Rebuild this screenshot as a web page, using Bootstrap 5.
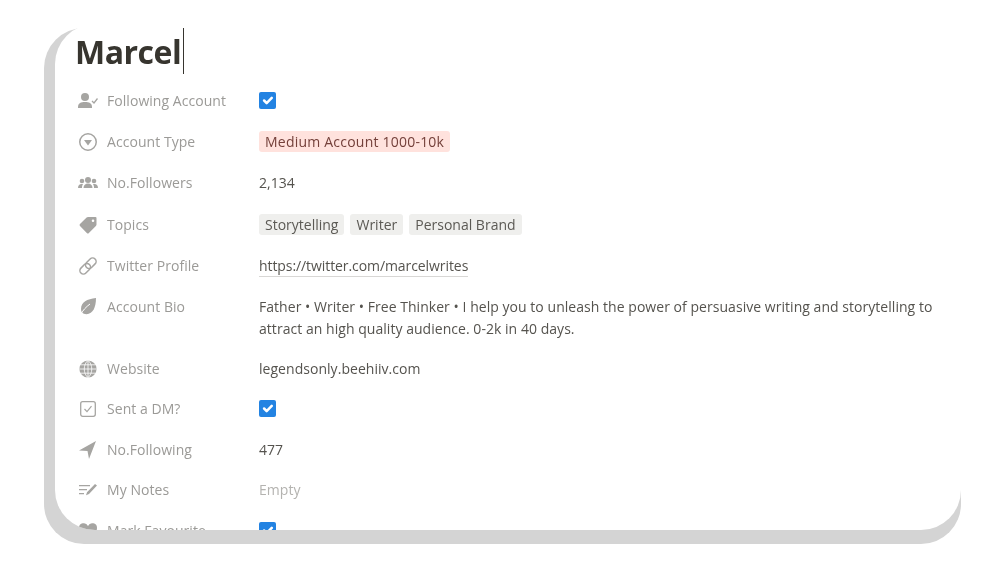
<!DOCTYPE html>
<html lang="en">
<head>
<meta charset="UTF-8">
<meta name="viewport" content="width=device-width, initial-scale=1.0">
<title>Marcel</title>
<link href="https://cdn.jsdelivr.net/npm/bootstrap@5.3.2/dist/css/bootstrap.min.css" rel="stylesheet">
<style>
body { background: #fff; font-family: "Open Sans", "Noto Sans", sans-serif; overflow: hidden; }
.page-frame { display: flow-root; margin: 28px 44px 0 44px; height: 516px; background: #d4d4d4; border-radius: 40px; }
.page-sheet { margin: -4px 0 14px 11px; height: 506px; background: #fff; border-radius: 40px 0 40px 40px; overflow: hidden; padding: 0 0 0 21px; filter: blur(.45px); }
.page-title { font-size: 32px; font-weight: 700; color: #37352f; line-height: 45px; margin: 4px 0 6.5px -1px; display: flex; align-items: center; letter-spacing: -.5px; }
.caret-bar { width: 1px; height: 46px; background: #37352f; margin-left: 2px; }
.prop-row { display: flex; min-height: 41.2px; align-items: flex-start; padding-top: 9.5px; font-size: 14px; line-height: 22px; }
.prop-row.bio { min-height: 62px; }
.prop-row.tight { min-height: 40.4px; }
.prop-name { width: 183px; flex: none; display: flex; align-items: center; color: #9b9a97; height: 22px; letter-spacing: .05px; }
.prop-name svg { width: 20px; height: 18px; margin: 0 9px 0 2px; flex: none; fill: #a6a5a2; }
.prop-val { color: #55534e; width: 680px; letter-spacing: .04px; }
.prop-val.empty { color: #b4b3b0; }
.form-check-input.tick { width: 17px; height: 17px; margin: 2px 0 0; display: block; border: 0; border-radius: 2px; background-color: #2383e2; opacity: 1; }
.chip { display: inline-block; border-radius: 3px; padding: 0 6px; height: 21px; line-height: 21px; background: #efefed; color: #5b5954; margin-right: 6px; letter-spacing: 0; }
.chip.red { background: #ffe2dd; color: #74403a; letter-spacing: .22px; }
.url-line { border-bottom: 1px solid #d8d7d5; display: inline-block; line-height: 20px; letter-spacing: -.08px; }
</style>
</head>
<body>
<div class="page-frame">
  <div class="page-sheet">
    <h1 class="page-title">Marcel<span class="caret-bar"></span></h1>

    <div class="prop-row">
      <div class="prop-name">
        <svg viewBox="0 0 20 18"><circle cx="7" cy="5" r="4"/><path d="M0 15c0-4 3-5 7-5s7 1 7 5v1H0z"/><path d="M14 9l2 2 3.500-4.500" fill="none" stroke="#a6a5a2" stroke-width="1.300"/></svg>
        Following Account
      </div>
      <div class="prop-val"><input class="form-check-input tick" type="checkbox" checked></div>
    </div>

    <div class="prop-row">
      <div class="prop-name">
        <svg viewBox="0 0 20 18"><path fill-rule="evenodd" d="M10 0a9 9 0 1 1 0 18a9 9 0 0 1 0-18zm0 1.500a7.500 7.500 0 1 0 0 15a7.500 7.500 0 0 0 0-15z"/><path d="M6 7h8l-4 5.500z"/></svg>
        Account Type
      </div>
      <div class="prop-val"><span class="chip red">Medium Account 1000-10k</span></div>
    </div>

    <div class="prop-row">
      <div class="prop-name">
        <svg viewBox="0 0 20 18"><circle cx="10" cy="6" r="3"/><circle cx="4" cy="7" r="2.300"/><circle cx="16" cy="7" r="2.300"/><path d="M5.500 14c0-3 2-4.500 4.500-4.500s4.500 1.500 4.500 4.500z"/><path d="M0 14c0-2.500 1.500-4 3.500-4c.8 0 1.200.1 1.500.3C4.300 11 4 12.500 4 14zM20 14c0-2.500-1.500-4-3.500-4c-.8 0-1.200.1-1.500.3c.7.7 1 2.200 1 3.700z"/></svg>
        No.Followers
      </div>
      <div class="prop-val">2,134</div>
    </div>

    <div class="prop-row">
      <div class="prop-name">
        <svg viewBox="0 0 20 18"><path fill-rule="evenodd" d="M10 1h7.500a1 1 0 0 1 1 1v6.500a2 2 0 0 1-.6 1.400l-7 7a1.500 1.500 0 0 1-2.100 0L2 10.100a1.500 1.500 0 0 1 0-2.100l6.600-6.400A2 2 0 0 1 10 1zm5 2.500a1.300 1.300 0 1 0 0 2.600a1.300 1.300 0 0 0 0-2.600z"/></svg>
        Topics
      </div>
      <div class="prop-val"><span class="chip">Storytelling</span><span class="chip">Writer</span><span class="chip">Personal Brand</span></div>
    </div>

    <div class="prop-row">
      <div class="prop-name">
        <svg viewBox="0 0 20 18"><g transform="rotate(-45 10 9)" fill="none" stroke="#a6a5a2" stroke-width="1.500"><rect x="0" y="5.500" width="12" height="7" rx="3.500"/><rect x="8" y="5.500" width="12" height="7" rx="3.500"/></g></svg>
        Twitter Profile
      </div>
      <div class="prop-val"><span class="url-line">https://twitter.com/marcelwrites</span></div>
    </div>

    <div class="prop-row bio">
      <div class="prop-name">
        <svg viewBox="0 0 20 18"><path d="M18 0C9 1 3 4 3 11c0 1.200.3 2.200.7 3C5 15.500 6.500 16.200 8.500 16.200C15 16 18 9 18 0z"/><path d="M2 17.500C5 12 8 9 12 6" fill="none" stroke="#fff" stroke-width="1"/></svg>
        Account Bio
      </div>
      <div class="prop-val">Father • Writer • Free Thinker • I help you to unleash the power of persuasive writing and storytelling to attract an high quality audience. 0-2k in 40 days.</div>
    </div>

    <div class="prop-row tight">
      <div class="prop-name">
        <svg viewBox="0 0 20 18"><circle cx="10" cy="9" r="8.600"/><path d="M10 .4v17.200M1.400 9h17.200M2.500 4.800h15M2.500 13.200h15M10 .4c-5 4-5 13.200 0 17.200M10 .4c5 4 5 13.200 0 17.200" fill="none" stroke="#fff" stroke-width=".8"/></svg>
        Website
      </div>
      <div class="prop-val">legendsonly.beehiiv.com</div>
    </div>

    <div class="prop-row tight">
      <div class="prop-name">
        <svg viewBox="0 0 20 18"><rect x="2.700" y="1.700" width="14.600" height="14.600" rx="2" fill="none" stroke="#a6a5a2" stroke-width="1.300"/><path d="M6.500 9l2.500 2.700 4.500-5.500" fill="none" stroke="#a6a5a2" stroke-width="1.200"/></svg>
        Sent a DM?
      </div>
      <div class="prop-val"><input class="form-check-input tick" type="checkbox" checked></div>
    </div>

    <div class="prop-row tight">
      <div class="prop-name">
        <svg viewBox="0 0 20 18"><path d="M18 0L1 9.500l8.500.5 1.500 8z"/></svg>
        No.Following
      </div>
      <div class="prop-val">477</div>
    </div>

    <div class="prop-row tight">
      <div class="prop-name">
        <svg viewBox="0 0 20 18"><path d="M1 4h11v1.300H1zM1 8h8v1.300H1zM1 12h5v1.300H1zM17 3l2 1.500-8 8.500-3 1.300 1-3z"/></svg>
        My Notes
      </div>
      <div class="prop-val empty">Empty</div>
    </div>

    <div class="prop-row tight">
      <div class="prop-name">
        <svg viewBox="0 0 20 18"><path d="M10 17C4 13 1 10 1 6a4.700 4.700 0 0 1 9-2a4.700 4.700 0 0 1 9 2c0 4-3 7-9 11z"/></svg>
        Mark Favourite
      </div>
      <div class="prop-val"><input class="form-check-input tick" type="checkbox" checked></div>
    </div>
  </div>
</div>
<script src="https://cdn.jsdelivr.net/npm/bootstrap@5.3.2/dist/js/bootstrap.bundle.min.js"></script>
</body>
</html>
